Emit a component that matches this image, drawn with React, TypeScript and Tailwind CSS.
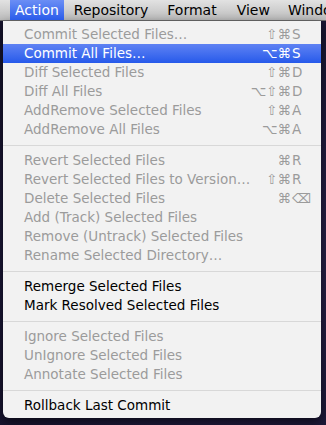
import React from "react";

type Item =
  | { sep: true }
  | { label: string; mods?: string; key?: string; disabled?: boolean; active?: boolean; sep?: false };

const items: Item[] = [
  { label: "Commit Selected Files…", mods: "⇧⌘", key: "S", disabled: true },
  { label: "Commit All Files…", mods: "⌥⌘", key: "S", active: true },
  { label: "Diff Selected Files", mods: "⇧⌘", key: "D", disabled: true },
  { label: "Diff All Files", mods: "⌥⇧⌘", key: "D", disabled: true },
  { label: "AddRemove Selected Files", mods: "⇧⌘", key: "A", disabled: true },
  { label: "AddRemove All Files", mods: "⌥⌘", key: "A", disabled: true },
  { sep: true },
  { label: "Revert Selected Files", mods: "⌘", key: "R", disabled: true },
  { label: "Revert Selected Files to Version…", mods: "⇧⌘", key: "R", disabled: true },
  { label: "Delete Selected Files", mods: "⌘", key: "⌫", disabled: true },
  { label: "Add (Track) Selected Files", disabled: true },
  { label: "Remove (Untrack) Selected Files", disabled: true },
  { label: "Rename Selected Directory…", disabled: true },
  { sep: true },
  { label: "Remerge Selected Files" },
  { label: "Mark Resolved Selected Files" },
  { sep: true },
  { label: "Ignore Selected Files", disabled: true },
  { label: "UnIgnore Selected Files", disabled: true },
  { label: "Annotate Selected Files", disabled: true },
  { sep: true },
  { label: "Rollback Last Commit" },
];

export default function App() {
  return (
    <div
      className="w-[326px] h-[425px] overflow-hidden bg-[radial-gradient(circle_at_70%_60%,#2e2350_0%,#1c1838_60%,#14122a_100%)] relative"
      style={{ fontFamily: '"DejaVu Sans", Verdana, sans-serif' }}
    >
      {/* menubar */}
      <div className="h-[21px] flex items-stretch bg-gradient-to-b from-[#e2e2e2] to-[#bdbdbd] border-b border-[#6e6e6e] text-[14px] text-black leading-[20px] whitespace-nowrap">
        <div className="ml-[10px] px-[5px] w-[54px] flex justify-center bg-gradient-to-b from-[#6b8ef5] to-[#2a5bea] text-white">
          Action
        </div>
        <div className="ml-[10px]">Repository</div>
        <div className="ml-[19px]">Format</div>
        <div className="ml-[20px]">View</div>
        <div className="ml-[18px]">Window</div>
      </div>
      {/* menu */}
      <div className="ml-[3px] w-[318px] bg-[#f2f2f2] rounded-b-[6px] pt-[4px] pb-[3px] shadow-[0_4px_12px_rgba(0,0,0,0.6)] text-[13.5px]">
        {items.map((it, i) =>
          "sep" in it && it.sep ? (
            <div key={i} className="h-[12px] flex items-center">
              <div className="h-px w-full bg-[#d8d8d8]" />
            </div>
          ) : (
            <div
              key={i}
              className={
                "h-[19px] flex items-center pl-[21px] pr-[13px] whitespace-nowrap " +
                ((it as any).active
                  ? "bg-gradient-to-b from-[#5f82f3] to-[#2659ea] text-white"
                  : (it as any).disabled
                  ? "text-[#9b9b9b]"
                  : "text-black")
              }
            >
              <span className="flex-1">{(it as any).label}</span>
              {(it as any).key && (
                <span className="flex items-center">
                  <span className="text-right">{(it as any).mods}</span>
                  <span className="w-[17px] pl-[1px] text-left">{(it as any).key}</span>
                </span>
              )}
            </div>
          )
        )}
      </div>
    </div>
  );
}
